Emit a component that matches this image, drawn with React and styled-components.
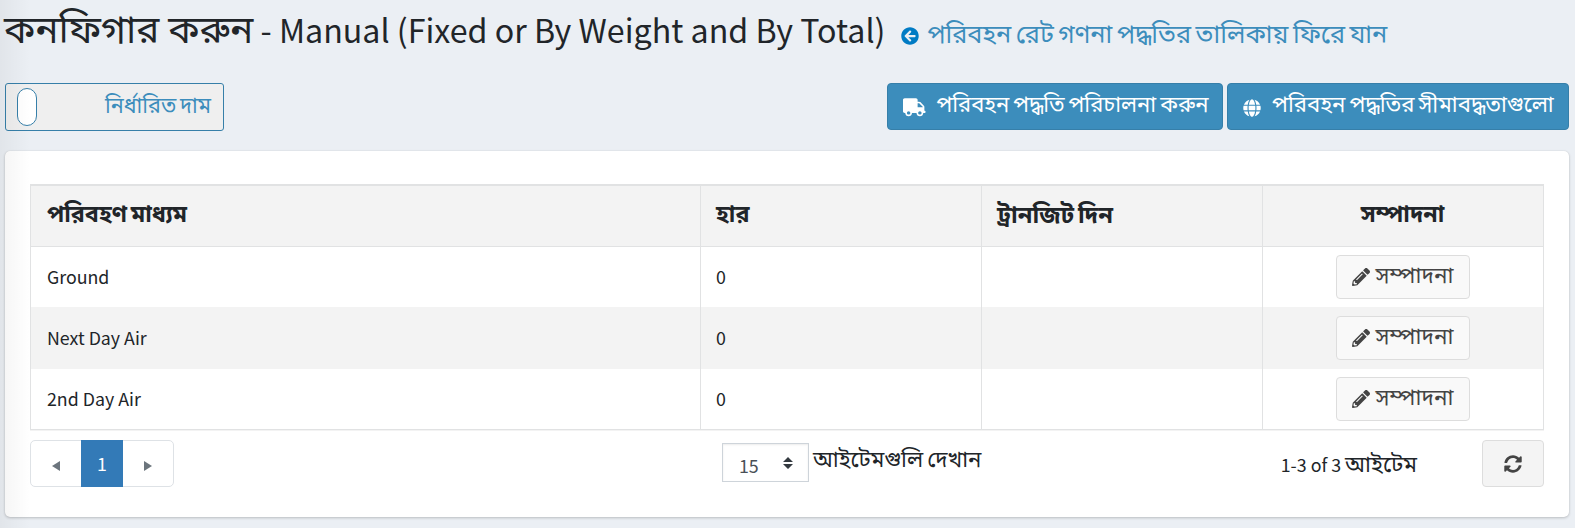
import React from "react";
import styled, { createGlobalStyle, css } from "styled-components";
import { FaArrowCircleLeft, FaTruck, FaGlobe, FaPencilAlt, FaSyncAlt } from "react-icons/fa";

const GlobalStyle = createGlobalStyle`
  *, *::before, *::after { box-sizing: border-box; }
  html { background: #ebeff4; }
  body { margin: 0; color: #212529; font: 17.8px/28px "Noto Sans CJK JP", "Noto Sans", sans-serif; }
  button { font-family: inherit; margin: 0; }
`;

const Page = styled.main`
  position: relative;
  height: 528px;
  padding: 4px 6px 0 5px;
  overflow: hidden;
  &::after {
    content: "";
    position: absolute;
    inset: 0 auto 0 0;
    width: 30px;
    pointer-events: none;
    background: linear-gradient(to right, rgba(0, 0, 0, 0.045), transparent);
  }
`;

const Bangla = styled.span`
  font-family: "Noto Sans Bengali", "Noto Sans", sans-serif;
  font-size: ${(p) => p.$size || 22.2}px;
  word-spacing: ${(p) => p.$space || "-0.08em"};
  white-space: nowrap;
`;

const TitleRow = styled.header`
  display: flex;
  align-items: baseline;
  height: 50px;
`;

const Title = styled.h1`
  margin: 0 0 0 -1px;
  font-size: 32.2px;
  font-weight: 400;
  line-height: 50px;
  white-space: nowrap;
`;

const BackLink = styled.a`
  display: flex;
  align-items: baseline;
  gap: 8px;
  margin-left: 16px;
  color: #3c8dbc;
  svg { color: #007bc4; font-size: 18px; align-self: center; margin-bottom: 2px; }
`;

const Toolbar = styled.div`
  display: flex;
  justify-content: space-between;
  margin-top: 29px;
  height: 48px;
`;

const ModeToggle = styled.button`
  display: flex;
  align-items: center;
  justify-content: space-between;
  width: 219px;
  height: 48px;
  padding: 0 12px 0 11px;
  border: 1px solid #367fa9;
  border-radius: 3px;
  background: #efefef;
  color: #3c8dbc;
`;

const Knob = styled.span`
  width: 20px;
  height: 38px;
  border: 1px solid #367fa9;
  border-radius: 10px;
  background: #fff;
`;

const Actions = styled.div`
  display: flex;
  gap: 4px;
`;

const PrimaryButton = styled.button`
  display: flex;
  align-items: center;
  width: ${(p) => p.$width}px;
  height: 47px;
  padding: 0 14px 0 15px;
  gap: 11px;
  border: 1px solid #367fa9;
  border-radius: 4px;
  background: #3c8dbc;
  color: #fff;
  svg { flex: none; margin-top: 2px; }
`;

const Card = styled.section`
  height: 366px;
  margin-top: 20px;
  padding: 33px 25px 0 25px;
  border-radius: 5px;
  background: #fff;
  box-shadow: 0 0 1px rgba(0, 0, 0, 0.125), 0 1px 3px rgba(0, 0, 0, 0.2);
`;

const Table = styled.div`
  border: 1px solid #e1e2e3;
  border-top-width: 2px;
  height: 246px;
  box-shadow: 0 1px 0 #f3f3f3;
`;

const Row = styled.div`
  display: grid;
  grid-template-columns: 669px 281px 281px 1fr;
  height: ${(p) => p.$height}px;
  background: ${(p) => (p.$shaded ? "#f3f3f3" : "#fff")};
  font-weight: ${(p) => (p.$head ? 700 : 400)};
  border-bottom: ${(p) => (p.$head ? "1px solid #e1e2e3" : "none")};
`;

const Cell = styled.div`
  display: flex;
  align-items: center;
  justify-content: ${(p) => (p.$center ? "center" : "flex-start")};
  padding: 0 16px 2px;
  & + & { border-left: 1px solid #e1e2e3; padding-left: 15px; }
`;

const HeadCell = styled(Cell)`
  padding-top: 2px;
  padding-bottom: 0;
`;

const ActionCell = styled(Cell)`
  padding-bottom: 0;
`;

const EditButton = styled.button`
  display: flex;
  align-items: center;
  justify-content: center;
  gap: 6px;
  width: 134px;
  height: 44px;
  padding: 0;
  border: 1px solid #ddd;
  border-radius: 4px;
  background: #f9f9f9;
  color: #444;
`;

const Footer = styled.footer`
  display: flex;
  align-items: center;
  margin-top: 10px;
  height: 47px;
`;

const Pager = styled.nav`
  display: flex;
  width: 144px;
  height: 47px;
  border: 1px solid #dee2e6;
  border-radius: 5px;
`;

const PageItem = styled.span`
  display: flex;
  flex: 1;
  align-items: center;
  justify-content: center;
  color: #6c757d;
  svg { margin-top: 5px; }
  ${(p) => p.$active && css`
    flex: 0 0 42px;
    margin: -1px 0;
    padding-bottom: 2px;
    background: #337ab7;
    color: #fff;
  `}
`;

const PageSize = styled.div`
  display: flex;
  align-items: center;
  justify-content: space-between;
  width: 87px;
  height: 39px;
  margin: 0 4px 2px 548px;
  padding: 4px 15px 0 16px;
  border: 1px solid #ced4da;
  background: #fff;
  box-shadow: inset 0 1px 2px rgba(0, 0, 0, 0.075);
  color: #495057;
  svg { margin-top: -4px; }
`;

const PageSizeLabel = styled.div`
  padding-bottom: 6px;
`;

const Summary = styled.div`
  display: flex;
  align-items: baseline;
  gap: 4px;
  margin-left: auto;
  margin-right: 65px;
  padding-top: 2px;
`;

const RefreshButton = styled.button`
  display: grid;
  place-items: center;
  width: 62px;
  height: 47px;
  padding: 0;
  border: 1px solid #ddd;
  border-radius: 4px;
  background: #f4f4f4;
  color: #444;
`;

const METHODS = [
  { name: "Ground", rate: "0", days: "", height: 60 },
  { name: "Next Day Air", rate: "0", days: "", height: 62 },
  { name: "2nd Day Air", rate: "0", days: "", height: 60 },
];

export default function App() {
  return (
    <Page>
      <GlobalStyle />
      <TitleRow>
        <Title><Bangla $size={38.7} $space="-0.03em">কনফিগার করুন</Bangla> - Manual (Fixed or By Weight and By Total)</Title>
        <BackLink><FaArrowCircleLeft /><Bangla $size={25.3}>পরিবহন রেট গণনা পদ্ধতির তালিকায় ফিরে যান</Bangla></BackLink>
      </TitleRow>
      <Toolbar>
        <ModeToggle><Knob /><Bangla $size={21.6}>নির্ধারিত দাম</Bangla></ModeToggle>
        <Actions>
          <PrimaryButton $width={336}><FaTruck size={22.5} /><Bangla $size={22}>পরিবহন পদ্ধতি পরিচালনা করুন</Bangla></PrimaryButton>
          <PrimaryButton $width={342}><FaGlobe size={18} /><Bangla>পরিবহন পদ্ধতির সীমাবদ্ধতাগুলো</Bangla></PrimaryButton>
        </Actions>
      </Toolbar>
      <Card>
        <Table>
          <Row $head $shaded $height={61}>
            <HeadCell><Bangla $size={23.3} $space="-0.1em">পরিবহণ মাধ্যম</Bangla></HeadCell>
            <HeadCell><Bangla $size={23.3}>হার</Bangla></HeadCell>
            <HeadCell><Bangla $size={23.8} $space="-0.1em">ট্রানজিট দিন</Bangla></HeadCell>
            <HeadCell $center><Bangla $size={23.3}>সম্পাদনা</Bangla></HeadCell>
          </Row>
          {METHODS.map((m, i) => (
            <Row key={m.name} $height={m.height} $shaded={i % 2 === 1}>
              <Cell>{m.name}</Cell>
              <Cell>{m.rate}</Cell>
              <Cell>{m.days}</Cell>
              <ActionCell $center><EditButton><FaPencilAlt size={18} /><Bangla $size={22.5}>সম্পাদনা</Bangla></EditButton></ActionCell>
            </Row>
          ))}
        </Table>
        <Footer>
          <Pager>
            <PageItem><svg width="8" height="10"><path d="M8 0v10L0 5z" fill="currentColor" /></svg></PageItem>
            <PageItem $active>1</PageItem>
            <PageItem><svg width="8" height="10"><path d="M0 0v10l8-5z" fill="currentColor" /></svg></PageItem>
          </Pager>
          <PageSize>15<svg width="10" height="12"><path d="M5 0l5 5H0zM0 7h10l-5 5z" fill="#343a40" /></svg></PageSize>
          <PageSizeLabel><Bangla>আইটেমগুলি দেখান</Bangla></PageSizeLabel>
          <Summary>1-3 of 3 <Bangla $size={22.4}>আইটেম</Bangla></Summary>
          <RefreshButton><FaSyncAlt size={18} /></RefreshButton>
        </Footer>
      </Card>
    </Page>
  );
}
